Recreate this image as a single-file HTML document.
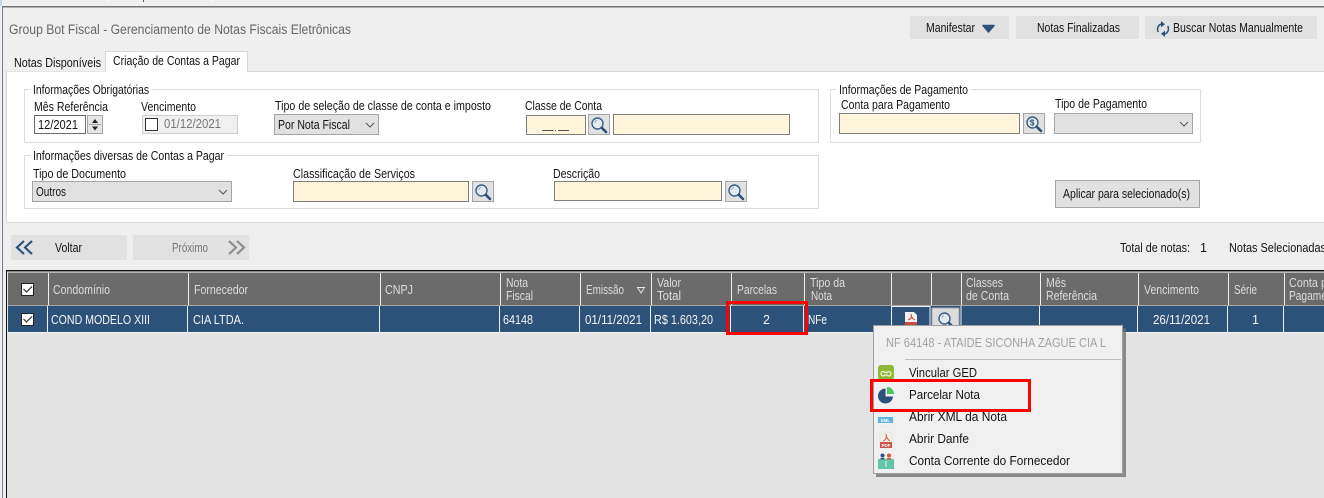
<!DOCTYPE html>
<html lang="pt-BR"><head><meta charset="utf-8"><title>Group Bot Fiscal</title>
<style>
html,body{margin:0;padding:0;width:1324px;height:498px;overflow:hidden;background:#f0f0f0}
svg{display:block}
text{font-family:"Liberation Sans",sans-serif;font-size:12.5px;fill:#141414;white-space:pre}
.h text{fill:#dcdcdc}
.r text{fill:#f4f4f4}
.g{fill:#777}
.f{fill:#fff5dc;stroke:#7d7d7d;stroke-width:1}
.s{fill:#e1e1e1;stroke:#a5a5a5;stroke-width:1}
.b{fill:#e1e1e1}
.gb{fill:none;stroke:#dcdcdc;stroke-width:1}
.chev{fill:none;stroke:#555;stroke-width:1}
</style></head><body>
<svg width="1324" height="498" viewBox="0 0 1324 498" xmlns="http://www.w3.org/2000/svg">
<defs>
<g id="lens"><circle cx="8.500" cy="8.500" r="5.500" fill="#e6ebef" stroke="#3c6184" stroke-width="1.400"/><path d="M12.800 12.800L17 17" stroke="#2d5279" stroke-width="2.600" stroke-linecap="round"/><path d="M5.800 8a3.200 3.200 0 0 1 2.500-2.600" fill="none" stroke="#9ab" stroke-width="1"/></g>
</defs>
<rect width="1324" height="498" fill="#f0f0f0"/>
<rect x="0" y="0" width="2" height="6" fill="#c5d5e8"/>
<path d="M108.500 0v2M211.500 0v2" stroke="#fff" stroke-width="1"/>
<path d="M143.500 0v2" stroke="#39618c" stroke-width="1"/>
<rect x="3" y="7" width="1321" height="491" fill="#efefef"/>
<rect x="2" y="6" width="1322" height="1.500" fill="#737373"/>
<rect x="2" y="6" width="1" height="492" fill="#6f7f90"/>
<text x="9" y="34" style="font-size:13.500px;fill:#666" textLength="342" lengthAdjust="spacingAndGlyphs">Group Bot Fiscal - Gerenciamento de Notas Fiscais Eletrônicas</text>

<!-- top buttons -->
<rect class="b" x="910" y="16" width="99" height="23"/>
<text x="926" y="32" textLength="49" lengthAdjust="spacingAndGlyphs">Manifestar</text>
<path d="M983 25.500h11l-5.500 6.500z" fill="#2d5279" stroke="#2d5279" stroke-width="1.500" stroke-linejoin="round"/>
<rect class="b" x="1016" y="16" width="123" height="23"/>
<text x="1037" y="32" textLength="83" lengthAdjust="spacingAndGlyphs">Notas Finalizadas</text>
<rect class="b" x="1145" y="16" width="172" height="23"/>
<g fill="none" stroke="#2d5279" stroke-width="1.500"><path d="M1158.300 32a5.500 5.500 0 0 1 3-8M1167.700 26a5.500 5.500 0 0 1-3 8"/></g>
<path d="M1161 21l4 3.200-4 3zM1165 37l-4-3.200 4-3z" fill="#2d5279"/>
<text x="1173" y="32" textLength="130" lengthAdjust="spacingAndGlyphs">Buscar Notas Manualmente</text>

<!-- tabs / panel -->
<rect x="6.500" y="71.500" width="1320" height="151" fill="#fff" stroke="#d9d9d9"/>
<rect x="7" y="53" width="98" height="18.500" fill="#f0f0f0"/>
<text x="14" y="67" textLength="87" lengthAdjust="spacingAndGlyphs">Notas Disponíveis</text>
<path d="M105.500 72V51.500H247.500V72" fill="#fff" stroke="#d9d9d9"/>
<rect x="106" y="70" width="141" height="3" fill="#fff"/>
<text x="113" y="65" textLength="127" lengthAdjust="spacingAndGlyphs">Criação de Contas a Pagar</text>

<!-- group boxes -->
<rect class="gb" x="24.500" y="89.500" width="794" height="53"/>
<rect x="30" y="85" width="122" height="9" fill="#fff"/>
<text x="33" y="94" textLength="116" lengthAdjust="spacingAndGlyphs">Informações Obrigatórias</text>
<rect class="gb" x="24.500" y="155.500" width="794" height="53"/>
<rect x="30" y="151" width="197" height="9" fill="#fff"/>
<text x="33" y="160" textLength="191" lengthAdjust="spacingAndGlyphs">Informações diversas de Contas a Pagar</text>
<rect class="gb" x="830.500" y="89.500" width="370" height="53"/>
<rect x="836" y="85" width="135" height="9" fill="#fff"/>
<text x="839" y="94" textLength="129" lengthAdjust="spacingAndGlyphs">Informações de Pagamento</text>

<!-- row 1 -->
<text x="34" y="111" textLength="74" lengthAdjust="spacingAndGlyphs">Mês Referência</text>
<rect x="34.500" y="115.500" width="51" height="18" fill="#fff" stroke="#6a6a6a"/>
<text x="38" y="129" style="font-size:13px" textLength="40" lengthAdjust="spacingAndGlyphs">12/2021</text>
<rect x="87.500" y="115.500" width="15" height="18" fill="#e6e6e6" stroke="#a5a5a5"/>
<path d="M92 123h6l-3-4zM92 126.500h6l-3 4z" fill="#222"/><path d="M89 124.500h12" stroke="#a5a5a5"/>
<text x="141" y="111" textLength="55" lengthAdjust="spacingAndGlyphs">Vencimento</text>
<rect x="142.500" y="115.500" width="95" height="18" fill="#f0f0f0" stroke="#cfcfcf"/>
<rect x="145.500" y="118.500" width="12" height="12" fill="#fff" stroke="#333"/>
<text x="164" y="128" class="g" textLength="57" lengthAdjust="spacingAndGlyphs">01/12/2021</text>
<text x="275" y="110" textLength="216" lengthAdjust="spacingAndGlyphs">Tipo de seleção de classe de conta e imposto</text>
<rect class="s" x="274.500" y="114.500" width="104" height="20"/>
<text x="278" y="129" textLength="72" lengthAdjust="spacingAndGlyphs">Por Nota Fiscal</text>
<path class="chev" d="M366 123l4 4 4-4"/>
<text x="525" y="110" textLength="77" lengthAdjust="spacingAndGlyphs">Classe de Conta</text>
<rect class="f" x="526.500" y="115.500" width="59" height="19"/>
<path d="M542 130.500h11.500M558 130.500h11" stroke="#555"/><rect x="555" y="130" width="1" height="1" fill="#555"/>
<rect class="s" x="588.500" y="114.500" width="21" height="20"/><use href="#lens" x="589" y="115"/>
<rect class="f" x="613.500" y="114.500" width="176" height="20"/>
<text x="841" y="109" textLength="109" lengthAdjust="spacingAndGlyphs">Conta para Pagamento</text>
<rect class="f" x="839.500" y="113.500" width="180" height="20"/>
<rect class="s" x="1023.500" y="113.500" width="21" height="20"/>
<use href="#lens" x="1024" y="114"/>
<text x="1030" y="125.500" style="font-size:8px;fill:#2d5279;font-weight:bold">$</text>
<text x="1055" y="108" textLength="92" lengthAdjust="spacingAndGlyphs">Tipo de Pagamento</text>
<rect class="s" x="1054.500" y="113.500" width="138" height="20"/>
<path class="chev" d="M1180 122l4 4 4-4"/>

<!-- row 2 -->
<text x="33" y="178" textLength="93" lengthAdjust="spacingAndGlyphs">Tipo de Documento</text>
<rect class="s" x="32.500" y="181.500" width="199" height="20"/>
<text x="36" y="196" textLength="30" lengthAdjust="spacingAndGlyphs">Outros</text>
<path class="chev" d="M219 190l4 4 4-4"/>
<text x="293" y="178" textLength="122" lengthAdjust="spacingAndGlyphs">Classificação de Serviços</text>
<rect class="f" x="293.500" y="181.500" width="175" height="20"/>
<rect class="s" x="472.500" y="181.500" width="21" height="20"/><use href="#lens" x="473" y="182"/>
<text x="553" y="178" textLength="47" lengthAdjust="spacingAndGlyphs">Descrição</text>
<rect class="f" x="554.500" y="181.500" width="167" height="19"/>
<rect class="s" x="725.500" y="181.500" width="21" height="20"/><use href="#lens" x="726" y="182"/>
<rect x="1055.500" y="180.500" width="144" height="27" fill="#e1e1e1" stroke="#a5a5a5"/>
<text x="1063" y="198" textLength="127" lengthAdjust="spacingAndGlyphs">Aplicar para selecionado(s)</text>

<!-- nav -->
<rect class="b" x="11" y="235" width="116" height="25"/>
<path d="M24 241l-7 6.500 7 6.500M32 241l-7 6.500 7 6.500" fill="none" stroke="#2d5279" stroke-width="2.200"/>
<text x="55" y="252" textLength="27" lengthAdjust="spacingAndGlyphs">Voltar</text>
<rect class="b" x="133" y="235" width="116" height="25"/>
<text x="172" y="252" class="g" textLength="36" lengthAdjust="spacingAndGlyphs">Próximo</text>
<path d="M229 241l7 6.500-7 6.500M237 241l7 6.500-7 6.500" fill="none" stroke="#8c8c8c" stroke-width="2.200"/>
<text x="1120" y="252" textLength="70" lengthAdjust="spacingAndGlyphs">Total de notas:</text>
<text x="1200" y="252">1</text>
<text x="1229" y="252" textLength="97" lengthAdjust="spacingAndGlyphs">Notas Selecionadas</text>

<!-- grid -->
<rect x="6" y="270" width="1318" height="228" fill="#e3e3e3"/>
<rect x="6" y="270" width="1318" height="1.500" fill="#111"/>
<rect x="6" y="270" width="1" height="228" fill="#111"/>
<rect x="7" y="271.500" width="1317" height="1" fill="#fff"/>
<rect x="8" y="272.500" width="1316" height="33" fill="#6b6b6b"/>
<rect x="8" y="305" width="1316" height="1" fill="#a8a8a8"/>
<rect x="8" y="306" width="1316" height="26" fill="#2d5279"/>
<rect x="8" y="332" width="1316" height="1" fill="#f4f4f4"/>
<path stroke="#f0f0f0" stroke-width="1" d="M48.500 273v32M188.500 273v32M380.500 273v32M500.500 273v32M580.500 273v32M651.500 273v32M731.500 273v32M804.500 273v32M891.500 273v32M931.500 273v32M961.500 273v32M1040.500 273v32M1138.500 273v32M1228.500 273v32M1284.500 273v32"/>
<path stroke="#f0f0f0" stroke-width="1" d="M47.500 306v26M187.500 306v26M379.500 306v26M499.500 306v26M579.500 306v26M650.500 306v26M730.500 306v26M803.500 306v26M961 306v26M1039.500 306v26M1137.500 306v26M1227.500 306v26M1283.500 306v26"/>

<rect x="21.500" y="283.500" width="12" height="12" fill="#fff" stroke="#222"/><path d="M23.500 289l3 3 5.500-5.500" fill="none" stroke="#444" stroke-width="1.300"/>
<rect x="21.500" y="313.500" width="12" height="12" fill="#fff" stroke="#222"/><path d="M23.500 319l3 3 5.500-5.500" fill="none" stroke="#444" stroke-width="1.300"/>

<g class="h">
<text x="53" y="294" textLength="57" lengthAdjust="spacingAndGlyphs">Condomínio</text>
<text x="194" y="294" textLength="54" lengthAdjust="spacingAndGlyphs">Fornecedor</text>
<text x="385" y="294" textLength="28" lengthAdjust="spacingAndGlyphs">CNPJ</text>
<text x="506" y="287" textLength="22" lengthAdjust="spacingAndGlyphs">Nota</text>
<text x="506" y="300" textLength="27" lengthAdjust="spacingAndGlyphs">Fiscal</text>
<text x="586" y="294" textLength="38" lengthAdjust="spacingAndGlyphs">Emissão</text>
<path d="M637.500 287.500h7l-3.500 5.500z" fill="none" stroke="#e8e8e8"/>
<text x="657" y="287" textLength="24" lengthAdjust="spacingAndGlyphs">Valor</text>
<text x="657" y="300" textLength="24" lengthAdjust="spacingAndGlyphs">Total</text>
<text x="737" y="294" textLength="40" lengthAdjust="spacingAndGlyphs">Parcelas</text>
<text x="810" y="287" textLength="35" lengthAdjust="spacingAndGlyphs">Tipo da</text>
<text x="811" y="300" textLength="21" lengthAdjust="spacingAndGlyphs">Nota</text>
<text x="966" y="287" textLength="37" lengthAdjust="spacingAndGlyphs">Classes</text>
<text x="966" y="300" textLength="43" lengthAdjust="spacingAndGlyphs">de Conta</text>
<text x="1046" y="287" textLength="20" lengthAdjust="spacingAndGlyphs">Mês</text>
<text x="1046" y="300" textLength="51" lengthAdjust="spacingAndGlyphs">Referência</text>
<text x="1144" y="294" textLength="55" lengthAdjust="spacingAndGlyphs">Vencimento</text>
<text x="1234" y="294" textLength="23" lengthAdjust="spacingAndGlyphs">Série</text>
<text x="1289" y="287" textLength="38" lengthAdjust="spacingAndGlyphs">Conta p</text>
<text x="1289" y="300" textLength="52" lengthAdjust="spacingAndGlyphs">Pagamento</text>
</g>
<g class="r">
<text x="51" y="324" textLength="99" lengthAdjust="spacingAndGlyphs">COND MODELO XIII</text>
<text x="193" y="324" textLength="51" lengthAdjust="spacingAndGlyphs">CIA LTDA.</text>
<text x="503" y="324" textLength="30" lengthAdjust="spacingAndGlyphs">64148</text>
<text x="585" y="324" textLength="57" lengthAdjust="spacingAndGlyphs">01/11/2021</text>
<text x="654" y="324" textLength="59" lengthAdjust="spacingAndGlyphs">R$ 1.603,20</text>
<text x="763" y="324">2</text>
<text x="808" y="324" textLength="19" lengthAdjust="spacingAndGlyphs">NFe</text>
<text x="1153" y="324" textLength="57" lengthAdjust="spacingAndGlyphs">26/11/2021</text>
<text x="1252" y="324">1</text>
</g>

<!-- row icon cells -->
<rect x="891.500" y="306.500" width="38.500" height="25" fill="#2d5279" stroke="#f2f2f2"/>
<path d="M905 312h9l3 3v11h-12z" fill="#f4f1ee"/><rect x="905" y="322" width="12" height="4" fill="#d04a3c"/><path d="M908 320c3-1 4-3 3-6 0 3 2 5 4 6" fill="none" stroke="#d04a3c"/>
<rect x="932" y="308" width="27" height="24" fill="#dcdcdc" stroke="#a8a8a8"/><use href="#lens" x="936" y="310"/>

<!-- context menu -->
<rect x="876" y="328" width="250" height="149" fill="#6c6c6c" opacity=".75"/>
<rect x="873.500" y="325.500" width="249" height="148" fill="#f0f0f0" stroke="#a0a0a0"/>
<text x="886" y="347" style="fill:#a3a3a3" textLength="220" lengthAdjust="spacingAndGlyphs">NF 64148 - ATAIDE SICONHA ZAGUE CIA L</text>
<rect x="905" y="359" width="216" height="1" fill="#bdbdbd"/>
<text x="909" y="377" textLength="68" lengthAdjust="spacingAndGlyphs">Vincular GED</text>
<text x="909" y="399" textLength="71" lengthAdjust="spacingAndGlyphs">Parcelar Nota</text>
<text x="909" y="421" textLength="98" lengthAdjust="spacingAndGlyphs">Abrir XML da Nota</text>
<text x="909" y="443" textLength="60" lengthAdjust="spacingAndGlyphs">Abrir Danfe</text>
<text x="909" y="465" textLength="161" lengthAdjust="spacingAndGlyphs">Conta Corrente do Fornecedor</text>
<!-- menu icons -->
<rect x="878" y="365" width="16" height="15" rx="3" fill="#8fb838"/><path d="M885 372.500a2.200 2.200 0 1 0 0 2.500h2a2.200 2.200 0 1 0 0-2.500z" fill="none" stroke="#f2f6e4" stroke-width="1.200"/>
<path d="M885.500 388.500a7.500 7.500 0 1 0 7.500 8h-7.500z" fill="#2d5279"/><path d="M887 387a7 7 0 0 1 7 7h-7z" fill="#4cc364"/>
<path d="M880 411h9l3 3v12h-12z" fill="#f0f2f4" stroke="#dcdfe2" stroke-width=".5"/><rect x="878" y="417" width="15" height="6" fill="#62b3e2"/>
<text x="880.500" y="422" style="font-size:4.500px;fill:#fff;font-weight:bold">XML</text>
<path d="M880 432h9l3 3v13h-12z" fill="#f4eee8" stroke="#ddd" stroke-width=".5"/><rect x="880" y="442" width="12" height="6" fill="#c9544a"/>
<text x="881.500" y="447" style="font-size:4.500px;fill:#fff;font-weight:bold">PDF</text><path d="M883 441c3-1 4-3 3-7 0 3 2 6 4 7" fill="none" stroke="#d0594c"/>
<rect x="878" y="459" width="16" height="10" fill="#63c6a8"/><circle cx="882.500" cy="455.500" r="2" fill="#2d5279"/><circle cx="889" cy="455.500" r="2" fill="#d9583d"/><path d="M880.500 458h4v1.500h-4z" fill="#2d5279"/><path d="M887 458h4v1.500h-4z" fill="#d9583d"/><path d="M886 461v6" stroke="#dff5ee"/>

<!-- red highlights -->
<rect x="727.500" y="302.500" width="79" height="31" fill="none" stroke="#f00" stroke-width="3"/>
<rect x="871.500" y="380.500" width="158" height="30" fill="none" stroke="#f00" stroke-width="3"/>
</svg>
</body></html>
